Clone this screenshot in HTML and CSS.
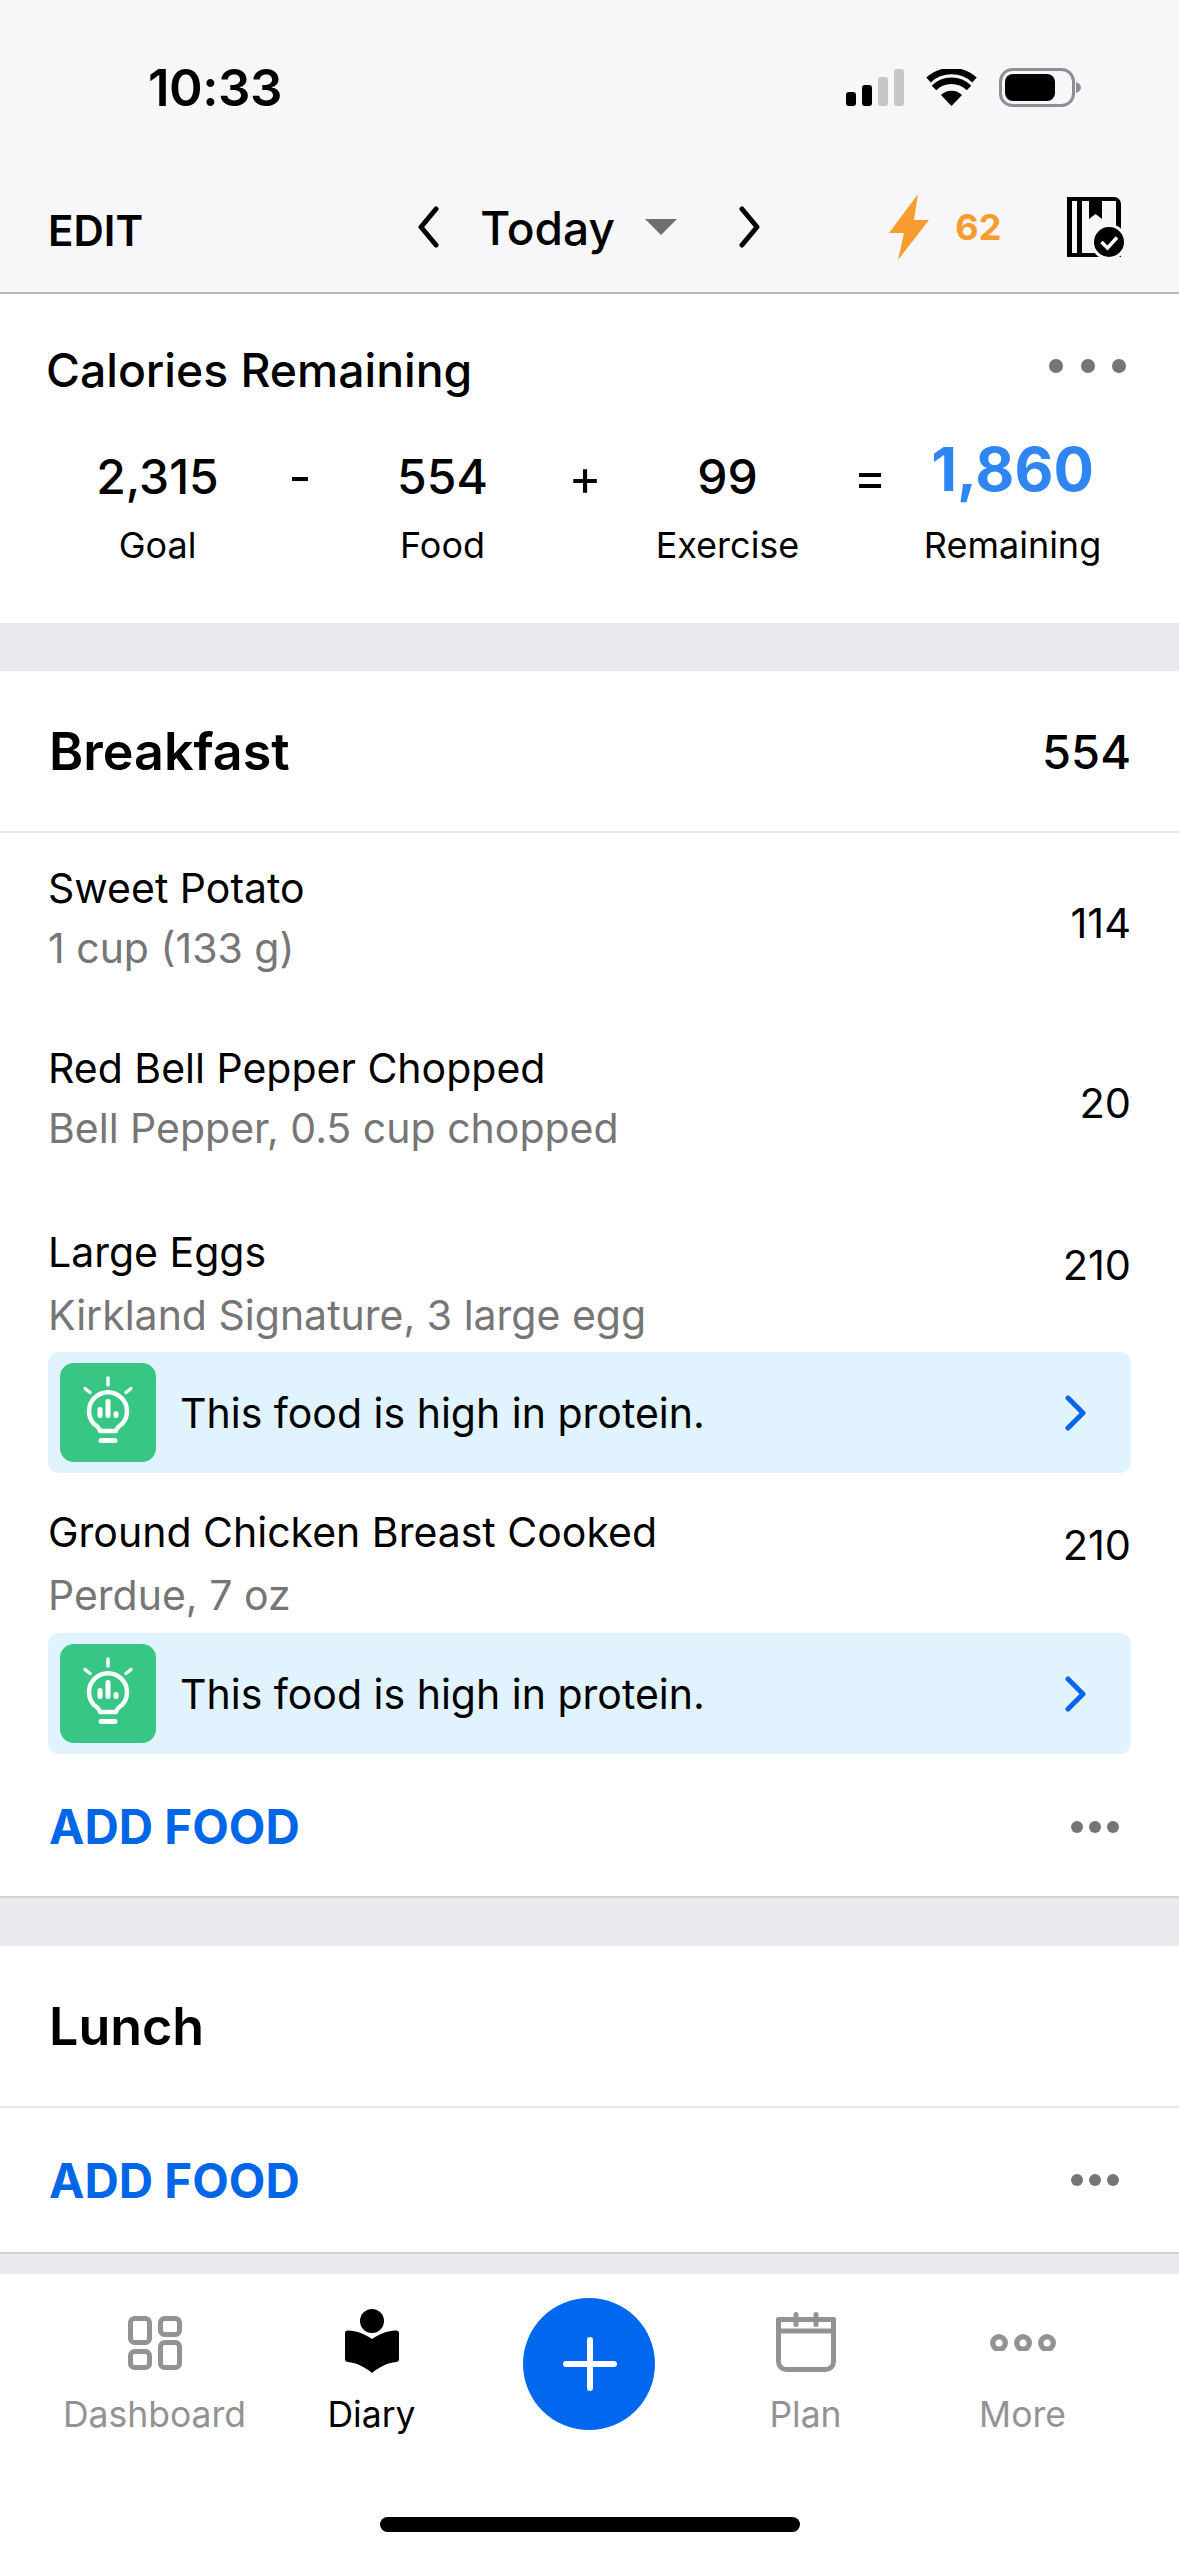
FILE: index.html
```html
<!DOCTYPE html>
<html lang="en">
<head>
<meta charset="utf-8">
<title>Diary</title>
<link rel="stylesheet" href="styles.css">
</head>
<body>
<div class="page">
  <header class="top">
    <div class="status">
      <span class="time">10:33</span>
      <div class="status-icons">
        <svg class="signal" viewBox="0 0 58 37"><rect x="0" y="23" width="10" height="14" rx="3" fill="#000"/><rect x="16" y="16" width="10" height="21" rx="3" fill="#000"/><rect x="32" y="8" width="10" height="29" rx="3" fill="#c6c6c8"/><rect x="48" y="0" width="10" height="37" rx="3" fill="#c6c6c8"/></svg>
        <svg class="wifi" viewBox="0 0 51 37"><path d="M25.500 37 15 26a15 15 0 0 1 21 0Z" fill="#000"/><path d="M8 19a25 25 0 0 1 35 0" fill="none" stroke="#000" stroke-width="6.500"/><path d="M2.500 11a34 34 0 0 1 46 0" fill="none" stroke="#000" stroke-width="6.500"/></svg>
        <svg class="battery" viewBox="0 0 82 39"><rect x="1.500" y="1.500" width="73" height="36" rx="12" fill="none" stroke="#8e8e93" stroke-width="3"/><rect x="6" y="6" width="50" height="27" rx="8" fill="#000"/><path d="M77 14c3 1 5 3 5 5.500s-2 4.500-5 5.500Z" fill="#8e8e93"/></svg>
      </div>
    </div>
    <nav class="toolbar">
      <span class="edit">EDIT</span>
      <div class="date-nav">
        <svg class="chev" viewBox="0 0 24 42"><path d="M20 3 5 21l15 18" fill="none" stroke="#000" stroke-width="5" stroke-linecap="round" stroke-linejoin="round"/></svg>
        <span class="today">Today</span>
        <svg class="caret" viewBox="0 0 32 16"><path d="M0 0h32L16 16Z" fill="#6e6e6e"/></svg>
        <svg class="chev" viewBox="0 0 24 42"><path d="M4 3l15 18L4 39" fill="none" stroke="#000" stroke-width="5" stroke-linecap="round" stroke-linejoin="round"/></svg>
      </div>
      <div class="streak">
        <svg class="bolt" viewBox="0 0 40 66"><path d="M29 0 0 39h15L9 66 40 26H25Z" fill="#f99c2f"/></svg>
        <span class="streak-num">62</span>
      </div>
      <svg class="planbook" viewBox="0 0 58 60"><path d="M0 0h47a7 7 0 0 1 7 7v53H0Z" fill="#000"/><rect x="5" y="4" width="5" height="52" fill="#f7f7f9"/><rect x="15" y="4" width="34" height="52" fill="#f7f7f9"/><path d="M22 4h13v18l-6.500-5-6.500 5Z" fill="#000"/><circle cx="42" cy="45" r="18" fill="#f7f7f9"/><circle cx="42" cy="45" r="15" fill="#000"/><path d="M34.500 45l6 6 9.500-10.500" fill="none" stroke="#fff" stroke-width="3.500"/></svg>
    </nav>
  </header>

  <section class="summary">
    <div class="summary-head">
      <h2 class="summary-title">Calories Remaining</h2>
      <div class="dots"><i></i><i></i><i></i></div>
    </div>
    <div class="calc">
      <div class="stat"><span class="stat-val">2,315</span><span class="stat-lab">Goal</span></div>
      <span class="op">-</span>
      <div class="stat"><span class="stat-val">554</span><span class="stat-lab">Food</span></div>
      <span class="op">+</span>
      <div class="stat"><span class="stat-val">99</span><span class="stat-lab">Exercise</span></div>
      <span class="op">=</span>
      <div class="stat"><span class="stat-val stat-blue">1,860</span><span class="stat-lab">Remaining</span></div>
    </div>
  </section>

  <div class="gap"></div>

  <section class="meal">
    <div class="meal-head"><h3 class="meal-name">Breakfast</h3><span class="meal-cal">554</span></div>
    <div class="food food-plain">
      <div class="food-text"><div class="food-name">Sweet Potato</div><div class="food-sub">1 cup (133 g)</div></div>
      <span class="food-cal">114</span>
    </div>
    <div class="food food-plain">
      <div class="food-text"><div class="food-name">Red Bell Pepper Chopped</div><div class="food-sub">Bell Pepper, 0.5 cup chopped</div></div>
      <span class="food-cal">20</span>
    </div>
    <div class="food food-top">
      <div class="food-text"><div class="food-name">Large Eggs</div><div class="food-sub">Kirkland Signature, 3 large egg</div></div>
      <span class="food-cal">210</span>
    </div>
    <div class="tip">
      <span class="tip-icon"><svg class="bulb" viewBox="0 0 96 99"><g fill="none" stroke="#fff" stroke-linecap="round"><path d="M48 15v7M25 25.500l5 4M71 25.500l-5 4" stroke-width="3.500"/><path d="M40 68c-.5-3-3-5-6-7a19 19 0 1 1 28 0c-3 2-5.500 4-6 7Z" stroke-width="4.500" stroke-linejoin="round"/><path d="M41 77.500h14" stroke-width="5"/><path d="M40 46.500v6M48 38.500v14M56 50.500v2" stroke-width="5"/></g></svg></span>
      <span class="tip-text">This food is high in protein.</span>
      <svg class="tip-chev" viewBox="0 0 24 36"><path d="M4 3l15 15L4 33" fill="none" stroke="#0066ee" stroke-width="5" stroke-linecap="round" stroke-linejoin="round"/></svg>
    </div>
    <div class="food food-top food-last">
      <div class="food-text"><div class="food-name">Ground Chicken Breast Cooked</div><div class="food-sub">Perdue, 7 oz</div></div>
      <span class="food-cal">210</span>
    </div>
    <div class="tip">
      <span class="tip-icon"><svg class="bulb" viewBox="0 0 96 99"><g fill="none" stroke="#fff" stroke-linecap="round"><path d="M48 15v7M25 25.500l5 4M71 25.500l-5 4" stroke-width="3.500"/><path d="M40 68c-.5-3-3-5-6-7a19 19 0 1 1 28 0c-3 2-5.500 4-6 7Z" stroke-width="4.500" stroke-linejoin="round"/><path d="M41 77.500h14" stroke-width="5"/><path d="M40 46.500v6M48 38.500v14M56 50.500v2" stroke-width="5"/></g></svg></span>
      <span class="tip-text">This food is high in protein.</span>
      <svg class="tip-chev" viewBox="0 0 24 36"><path d="M4 3l15 15L4 33" fill="none" stroke="#0066ee" stroke-width="5" stroke-linecap="round" stroke-linejoin="round"/></svg>
    </div>
    <div class="add-row add-first"><span class="add">ADD FOOD</span><div class="mini-dots"><i></i><i></i><i></i></div></div>
  </section>

  <div class="gap gap-line"></div>

  <section class="meal">
    <div class="meal-head"><h3 class="meal-name">Lunch</h3></div>
    <div class="add-row add-second"><span class="add">ADD FOOD</span><div class="mini-dots"><i></i><i></i><i></i></div></div>
  </section>

  <div class="gap gap-short"></div>

  <footer class="tabbar">
    <div class="tabs">
      <div class="tab">
        <svg class="tab-icon icon-dash" viewBox="0 0 54 54"><g fill="none" stroke="#939393" stroke-width="5"><rect x="2.500" y="2.500" width="19" height="24" rx="4"/><rect x="32.500" y="2.500" width="19" height="16" rx="4"/><rect x="2.500" y="35.500" width="19" height="16" rx="4"/><rect x="32.500" y="26.500" width="19" height="25" rx="4"/></g></svg>
        <span class="tab-label">Dashboard</span>
      </div>
      <div class="tab tab-active">
        <svg class="tab-icon icon-diary" viewBox="0 0 54 64"><circle cx="27" cy="12" r="12" fill="#000"/><path d="M0 24Q0 21 3 21.500C12 22 20 25 27 30C34 25 42 22 51 21.500Q54 21 54 24V50Q54 53 51 53C42 54 34 58 27 64C20 58 12 54 3 53Q0 53 0 50Z" fill="#000"/></svg>
        <span class="tab-label">Diary</span>
      </div>
      <div class="tab tab-plus">
        <span class="plus"><svg class="plus-svg" viewBox="0 0 54 54"><path d="M27 3v48M3 27h48" stroke="#fff" stroke-width="6" stroke-linecap="round"/></svg></span>
      </div>
      <div class="tab">
        <svg class="tab-icon icon-plan" viewBox="0 0 60 60"><g fill="none" stroke="#939393" stroke-width="5"><path d="M2.500 7.500h55v42a8 8 0 0 1-8 8h-39a8 8 0 0 1-8-8Z" stroke-linejoin="round"/><path d="M2.500 19h55"/><path d="M20 2.500v10M40 2.500v10" stroke-linecap="round"/></g></svg>
        <span class="tab-label">Plan</span>
      </div>
      <div class="tab">
        <svg class="tab-icon icon-more" viewBox="0 0 66 17"><g fill="none" stroke="#939393" stroke-width="5.500"><circle cx="9" cy="9" r="6.250"/><circle cx="33" cy="9" r="6.250"/><circle cx="57" cy="9" r="6.250"/></g></svg>
        <span class="tab-label">More</span>
      </div>
    </div>
    <div class="home"></div>
  </footer>
</div>
</body>
</html>
```

FILE: styles.css
```css
* { box-sizing: border-box; }
html, body { margin: 0; padding: 0; background: #fff; }
body { font-family: Inter, "Liberation Sans", sans-serif; color: #000; }
.page { width: 1179px; height: 2556px; display: flex; flex-direction: column; overflow: hidden; }

.top { height: 294px; background: #f7f7f9; border-bottom: 2px solid #b8b8ba; flex: none; }
.status { height: 174px; padding: 0 98px 0 148px; display: flex; align-items: flex-start; justify-content: space-between; }
.time { font-size: 51px; font-weight: 600; line-height: 60px; margin-top: 58px; letter-spacing: -0.5px; }
.status-icons { display: flex; align-items: flex-start; margin-top: 68px; }
.signal { width: 58px; height: 37px; margin-top: 1px; }
.wifi { width: 51px; height: 37px; margin: 1px 22px 0 22px; }
.battery { width: 82px; height: 39px; }

.toolbar { height: 118px; display: flex; align-items: center; padding: 0 54px 12px 48px; }
.edit { font-size: 42px; font-weight: 600; width: 369px; margin-top: 6px; }
.date-nav { display: flex; align-items: center; }
.chev { width: 24px; height: 42px; }
.today { font-size: 46px; font-weight: 500; margin: 2px 0 0 40px; width: 165px; }
.caret { width: 32px; height: 16px; margin-right: 61px; }
.streak { display: flex; align-items: center; margin-left: 127px; width: 178px; }
.bolt { width: 40px; height: 66px; }
.streak-num { font-size: 36px; font-weight: 700; color: #f99c2f; margin-left: 26px; }
.planbook { width: 58px; height: 60px; margin-left: auto; flex: none; }

.summary { height: 329px; padding: 0 53px 0 46px; flex: none; }
.summary-head { display: flex; justify-content: space-between; align-items: center; height: 60px; margin-top: 46px; }
.summary-title { margin: 0; font-size: 46.3px; font-weight: 500; line-height: 60px; }
.dots { display: flex; gap: 17.5px; margin-top: -8px; }
.dots i { display: block; width: 14px; height: 14px; border-radius: 50%; background: #757575; }
.calc { display: grid; grid-template-columns: 175px 110px 175px 110px 175px 110px 175px; margin: 29px 0 0 24px; width: 1030px; }
.stat { display: flex; flex-direction: column; align-items: center; white-space: nowrap; }
.stat-val { font-size: 48px; font-weight: 450; line-height: 60px; height: 78px; padding-top: 18px; }
.stat-blue { font-size: 60px; font-weight: 700; color: #2f86f2; padding-top: 3px; line-height: 74px; }
.stat-lab { font-size: 36px; line-height: 44px; margin-top: 16px; }
.op { font-size: 50px; text-align: center; line-height: 60px; padding-top: 18px; font-weight: 400; }

.gap { height: 48px; background: #e9e9ee; flex: none; }
.gap-line { height: 50px; border-top: 2px solid #d3d3d7; }
.gap-short { height: 22px; border-top: 2px solid #d3d3d7; }

.meal { flex: none; }
.meal-head { height: 162px; display: flex; align-items: center; justify-content: space-between; padding: 0 48px 0 49px; border-bottom: 2px solid #e6e6e8; }
.meal-name { margin: 0; font-size: 52px; font-weight: 600; }
.meal-cal { font-size: 47px; font-weight: 450; }

.food { display: flex; justify-content: space-between; padding: 0 48px; }
.food-plain { align-items: center; height: 180px; }
.food-plain .food-text { margin-bottom: 10px; }
.food-name { font-size: 41px; line-height: 60px; white-space: nowrap; }
.food-sub { font-size: 41px; line-height: 60px; color: #767676; white-space: nowrap; }
.food-cal { font-size: 41.5px; font-weight: 420; line-height: 60px; }
.food-top { padding-top: 29px; height: 159px; }
.food-top .food-name { height: 63px; }
.food-top .food-cal { margin-top: 13px; }
.food-last { height: 160px; }

.tip { height: 121px; margin: 0 48px; background: #e1f3fe; border-radius: 11px; display: flex; align-items: center; padding: 0 43px 0 12px; }
.tip-icon { width: 96px; height: 99px; background: #38c684; border-radius: 14px; flex: none; }
.bulb { width: 96px; height: 99px; display: block; }
.tip-text { font-size: 41px; margin-left: 24px; flex: 1; white-space: nowrap; }
.tip-chev { width: 24px; height: 36px; }

.add-row { display: flex; align-items: center; justify-content: space-between; padding: 0 60px 0 49px; }
.add-first { height: 142px; padding-top: 3px; }
.add-second { height: 144px; }
.add { font-size: 47.5px; font-weight: 700; color: #0066e8; }
.mini-dots { display: flex; gap: 6px; }
.mini-dots i { display: block; width: 12px; height: 12px; border-radius: 50%; background: #757575; }

.tabbar { flex: 1; background: #fff; display: flex; flex-direction: column; align-items: center; min-height: 0; }
.tabs { display: grid; grid-template-columns: repeat(5, 217px); width: 1085px; height: 243px; align-self: flex-start; margin-left: 46px; }
.tab { display: flex; flex-direction: column; align-items: center; color: #939393; height: 243px; padding-top: 35px; }
.tab-icon { display: block; }
.icon-dash { width: 54px; height: 54px; margin: 7px 0 3px; }
.icon-diary { width: 54px; height: 64px; }
.icon-plan { width: 60px; height: 60px; margin: 3px 0 1px; }
.icon-more { width: 66px; height: 17px; margin: 25px 0 22px; }
.tab-label { font-size: 35.5px; line-height: 44px; margin-top: 20px; }
.tab-active { color: #000; }
.tab-plus { padding-top: 24px; }
.plus { width: 132px; height: 132px; border-radius: 50%; background: #0067ee; display: flex; align-items: center; justify-content: center; }
.plus-svg { width: 54px; height: 54px; margin-left: 3px; }
.home { width: 420px; height: 15px; border-radius: 8px; background: #000; flex: none; }
```
